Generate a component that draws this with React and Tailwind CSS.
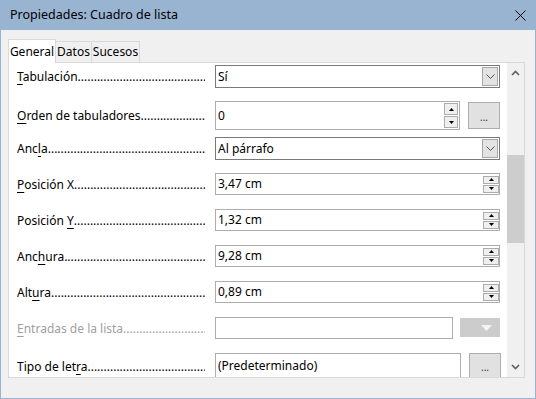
import React from "react";

function Leader({ children, disabled }) {
  return (
    <div
      className={
        "flex w-[188px] shrink-0 items-center overflow-hidden whitespace-nowrap leading-[17px] " +
        (disabled ? "text-[#a0a0a0]" : "text-black")
      }
    >
      <span className="shrink-0">{children}</span>
      <span className="min-w-0 flex-1 overflow-hidden">{".".repeat(60)}</span>
    </div>
  );
}

function Tri({ up }) {
  return (
    <svg width="5" height="3" viewBox="0 0 5 3">
      <path d={up ? "M0 3H5L2.5 0Z" : "M0 0H5L2.5 3Z"} fill="#000" />
    </svg>
  );
}

function SpinButtons({ big }) {
  const box = big
    ? "flex h-[12px] w-[14px] items-center justify-center border border-[#acacac] bg-[#efefef]"
    : "flex h-[8px] w-[16px] items-center justify-center border border-[#acacac] bg-[#efefef]";
  return (
    <div className={"flex flex-col " + (big ? "mr-px gap-px" : "gap-px")}>
      <div className={box}>
        <Tri up />
      </div>
      <div className={box}>
        <Tri />
      </div>
    </div>
  );
}

function Chevron() {
  return (
    <svg width="9" height="6" viewBox="0 0 9 6">
      <path d="M0.5 0.5L4.5 4.5L8.5 0.5" fill="none" stroke="#505050" strokeWidth="1" />
    </svg>
  );
}

function ComboField({ value }) {
  return (
    <div className="flex h-[23px] w-[285px] items-stretch border border-[#7a7a7a] bg-white">
      <div className="flex flex-1 items-center pl-[2px]">{value}</div>
      <div className="m-px flex w-[16px] items-center justify-center border border-[#a8a8a8] bg-[#e3e3e3]">
        <Chevron />
      </div>
    </div>
  );
}

function SpinField({ value }) {
  return (
    <div className="flex h-[22px] w-[285px] items-center border border-[#adadad] bg-white">
      <div className="flex flex-1 items-center pl-[2px]">{value}</div>
      <SpinButtons />
    </div>
  );
}

function DotsButton({ h }) {
  return (
    <div
      className={
        "ml-[8px] flex w-[32px] items-end justify-center border border-[#adadad] bg-[#e1e1e1] pb-[6px] text-[10px] leading-none text-[#333] " +
        h
      }
    >
      ...
    </div>
  );
}

function Row({ label, disabled, children }) {
  return (
    <div className="flex h-[36px] shrink-0 items-start">
      <div className="flex items-center">
        <Leader disabled={disabled}>{label}</Leader>
        <div className="ml-[10px] flex items-start">{children}</div>
      </div>
    </div>
  );
}

function U({ children }) {
  return <span className="underline underline-offset-[3px]">{children}</span>;
}

export default function App() {
  return (
    <div className="flex h-[399px] w-[536px] flex-col overflow-hidden bg-[#99b4d1] px-px pb-px font-['Noto_Sans',sans-serif] text-[12px] leading-none text-black">
      <div className="flex h-[30px] shrink-0 items-center justify-between pl-[9px] pr-[9px]">
        <span className="text-[12.5px]">Propiedades: Cuadro de lista</span>
        <svg width="11" height="11" viewBox="0 0 11 11">
          <path d="M0.5 0.5L10.5 10.5M10.5 0.5L0.5 10.5" stroke="#000" strokeWidth="1" />
        </svg>
      </div>

      <div className="flex flex-1 flex-col bg-[#f0f0f0] pl-[7px] pr-[10px] pt-[9px]">
        <div className="flex h-[23px] items-end">
          <div className="-mb-px z-10 flex h-[24px] w-[48px] items-center justify-center border border-b-0 border-[#d9d9d9] bg-white">
            General
          </div>
          <div className="flex h-[21px] w-[36px] items-center justify-center border border-l-0 border-b-0 border-[#d9d9d9] bg-[#f0f0f0]">
            Datos
          </div>
          <div className="flex h-[21px] w-[48px] items-center justify-center border border-l-0 border-b-0 border-[#d9d9d9] bg-[#f0f0f0]">
            Sucesos
          </div>
        </div>

        <div className="flex h-[316px] border border-[#d9d9d9] bg-white">
          <div className="flex flex-1 flex-col overflow-hidden pl-[8px] pt-[2px]">
            <Row
              label={
                <>
                  <U>T</U>abulación
                </>
              }
            >
              <ComboField value="Sí" />
            </Row>
            <Row
              label={
                <>
                  <U>O</U>rden de tabuladores
                </>
              }
            >
              <div className="flex h-[29px] w-[245px] items-center border border-[#adadad] bg-white">
                <div className="flex-1 pl-[2px]">0</div>
                <SpinButtons big />
              </div>
              <div className="mt-px">
                <DotsButton h="h-[27px]" />
              </div>
            </Row>
            <Row
              label={
                <>
                  Anc<U>l</U>a
                </>
              }
            >
              <ComboField value="Al párrafo" />
            </Row>
            <Row
              label={
                <>
                  <U>P</U>osición X
                </>
              }
            >
              <SpinField value="3,47 cm" />
            </Row>
            <Row
              label={
                <>
                  Posición <U>Y</U>
                </>
              }
            >
              <SpinField value="1,32 cm" />
            </Row>
            <Row
              label={
                <>
                  Anc<U>h</U>ura
                </>
              }
            >
              <SpinField value="9,28 cm" />
            </Row>
            <Row
              label={
                <>
                  Alt<U>u</U>ra
                </>
              }
            >
              <SpinField value="0,89 cm" />
            </Row>
            <Row
              disabled
              label={
                <>
                  <U>E</U>ntradas de la lista
                </>
              }
            >
              <div className="h-[22px] w-[238px] border border-[#adadad] bg-white" />
              <div className="ml-[7px] mt-[1px] flex h-[19px] w-[40px] items-center justify-end bg-[#cccccc] pr-[8px]">
                <svg width="11" height="6" viewBox="0 0 11 6">
                  <path d="M0 0H11L5.5 6Z" fill="#f4f4f4" />
                </svg>
              </div>
            </Row>
            <Row
              label={
                <>
                  Tipo de let<U>r</U>a
                </>
              }
            >
              <div className="flex h-[26px] w-[246px] items-center border border-[#adadad] bg-white pl-[2px]">
                (Predeterminado)
              </div>
              <DotsButton h="h-[26px]" />
            </Row>
          </div>

          <div className="flex w-[17px] shrink-0 flex-col items-center bg-[#f0f0f0]">
            <div className="flex h-[17px] items-center justify-center pt-[2px]">
              <svg width="9" height="6" viewBox="0 0 9 6">
                <path d="M1 5L4.5 1.5L8 5" fill="none" stroke="#606060" strokeWidth="1.6" />
              </svg>
            </div>
            <div className="mt-[75px] h-[88px] w-[17px] bg-[#cdcdcd]" />
            <div className="flex-1" />
            <div className="flex h-[17px] items-center justify-center pb-[4px]">
              <svg width="9" height="6" viewBox="0 0 9 6">
                <path d="M1 1L4.5 4.5L8 1" fill="none" stroke="#606060" strokeWidth="1.6" />
              </svg>
            </div>
          </div>
        </div>
      </div>
    </div>
  );
}
